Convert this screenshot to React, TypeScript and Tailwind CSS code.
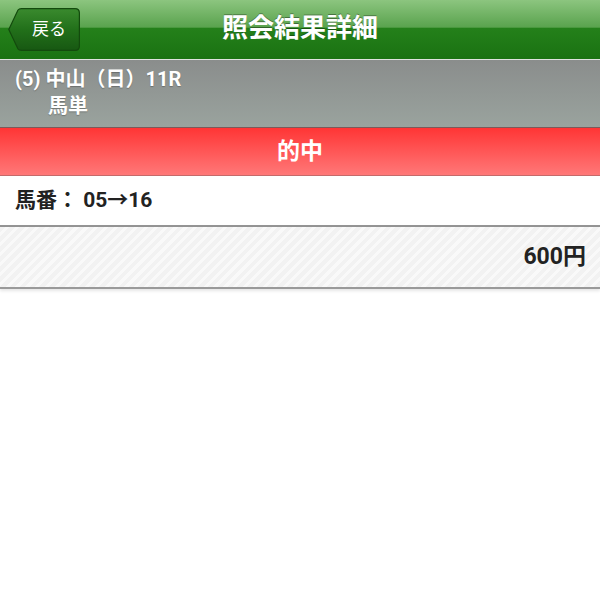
const font = "font-['Roboto','Noto_Sans_CJK_JP',sans-serif]"

function BackButton() {
  return (
    <button className="relative ml-[8px] h-[43px] w-[72px] shrink-0">
      <svg className="absolute inset-0" width="72" height="43" viewBox="0 0 72 43">
        <defs>
          <linearGradient id="backFill" x1="0" y1="0" x2="0" y2="1">
            <stop offset="0" stopColor="#3a8a2e" />
            <stop offset="0.5" stopColor="#22701a" />
            <stop offset="1" stopColor="#175812" />
          </linearGradient>
        </defs>
        <path
          d="M0.8 21.5 L10 2 Q11 0.6 13.5 0.6 H67 Q71.4 0.6 71.4 5 V38 Q71.4 42.4 67 42.4 H13.5 Q11 42.4 10 41 Z"
          fill="url(#backFill)"
          stroke="#134a0d"
          strokeWidth="1.2"
        />
      </svg>
      <span className="relative block pl-[10px] text-center text-[17px] leading-[43px] text-white">戻る</span>
    </button>
  )
}

export default function App() {
  return (
    <div className={`${font} min-h-screen w-[600px] bg-white`}>
      {/* title bar */}
      <div className="relative flex h-[59px] items-center bg-[linear-gradient(to_bottom,#8cc57f_0%,#5aa34e_46%,#24801a_48%,#1a7212_100%)]">
        <BackButton />
        <h1 className="pointer-events-none absolute inset-x-0 top-0 text-center text-[26px] font-bold leading-[56px] text-white [text-shadow:0_-1px_0_rgba(0,0,0,0.35)]">
          照会結果詳細
        </h1>
      </div>
      <div className="h-px bg-[#dfe3df]" />

      {/* race info */}
      <div className="h-[67px] bg-[linear-gradient(to_bottom,#8a8d8c,#9aa39e)] pl-[15px] pt-[6px] text-[20px] font-bold leading-[27px] text-white [text-shadow:0_1px_1px_rgba(0,0,0,0.25)]">
        <div>(5) 中山（日）11R</div>
        <div className="pl-[33px]">馬単</div>
      </div>

      {/* result */}
      <div className="h-px bg-[#7c5a5a]" />
      <div className="h-[47px] bg-[linear-gradient(to_bottom,#ff3535,#ff7878)] text-center text-[23px] font-bold leading-[47px] text-white">
        的中
      </div>
      <div className="h-px bg-[#c46a6a]" />

      <div className="flex h-[51px] items-center border-b-2 border-[#949494] pl-[15px] text-[21px] font-bold text-[#222]">
        馬番： 05→16
      </div>

      <div className="flex h-[62px] items-center justify-end border-b-2 border-[#9a9a9a] bg-[repeating-linear-gradient(135deg,#f2f2f2_0px,#f2f2f2_4px,#f9f9f9_4px,#f9f9f9_7px)] pr-[14px] text-[23px] font-bold text-[#222] shadow-[0_2px_3px_rgba(0,0,0,0.1)]">
        600円
      </div>
    </div>
  )
}
